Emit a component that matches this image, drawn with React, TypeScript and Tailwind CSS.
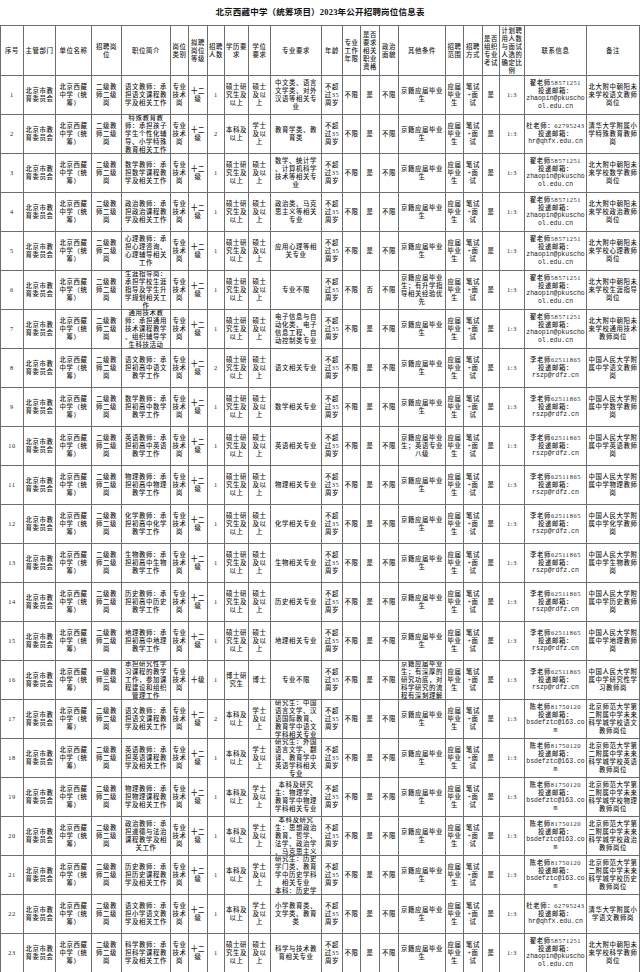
import React from "react";

// column widths, left to right (sum = 639)
const widths = [23, 32, 36, 30, 49, 18, 19, 17, 24, 22, 51, 21, 18, 19, 19, 47, 18, 19, 17, 25, 62, 53];

const headers = [
  "序号",
  "主管部门",
  "单位名称",
  "招聘岗|位",
  "职位简介",
  "岗位|类别",
  "拟聘|岗位|等级",
  "招聘|人数",
  "学历要|求",
  "学位|要求",
  "专业要求",
  "年龄",
  "专业|工作|年限",
  "是否|要求|相关|职业|资格",
  "政治|面貌",
  "其他条件",
  "招聘|范围",
  "招聘|方式",
  "是否|组织|专业|考试",
  "计划聘|用人数|与面试|人选的|确定比|例",
  "联系信息",
  "备注",
];

const ZHAI = "翟老师58571251|投递邮箱：|zhaopin@pkuscho|ol.edu.cn";
const DU = "杜老师：62795243|投递邮箱：|hr@qhfx.edu.cn";
const LI = "李老师62511865|投递邮箱：|rszp@rdfz.cn";
const CHEN = "陈老师81750120|投递邮箱：|bsdefztc@163.co|m";
const MASTER = "硕士研|究生及|以上";
const MASTER_DEG = "硕士|及以|上";
const BACH = "本科及|以上";
const BACH_DEG = "学士|及以|上";
const JING = "京籍应届毕业|生";

type Row = {
  post?: string;
  intro: string;
  level?: string;
  count: string;
  edu: string;
  degree: string;
  major: string;
  cert?: string;
  other?: string;
  contact: string;
  note: string;
};

const rows: Row[] = [
  { intro: "语文教师：承|担语文课程教|学及相关工作", count: "1", edu: MASTER, degree: MASTER_DEG, major: "中文类、语言|文学类、对外|汉语等相关专|业", contact: ZHAI, note: "北大附中朝阳未|来学校语文教师|岗位" },
  { intro: "特殊教育教|师：承担孩子|学生个性化辅|导、小学特殊|教育相关工作", count: "2", edu: BACH, degree: BACH_DEG, major: "教育学类、教|育类", contact: DU, note: "清华大学附属小|学特殊教育教师|岗" },
  { intro: "数学教师：承|担数学课程教|学及相关工作", count: "1", edu: MASTER, degree: MASTER_DEG, major: "数学、统计学|、计算机科学|技术等相关专|业", contact: ZHAI, note: "北大附中朝阳未|来学校数学教师|岗位" },
  { intro: "政治教师：承|担政治课程教|学及相关工作", count: "1", edu: MASTER, degree: MASTER_DEG, major: "政治类、马克|思主义等相关|专业", contact: ZHAI, note: "北大附中朝阳未|来学校政治教师|岗位" },
  { intro: "心理教师：承|担心理咨询、|心理辅导相关|工作", count: "1", edu: MASTER, degree: MASTER_DEG, major: "应用心理等相|关专业", contact: ZHAI, note: "北大附中朝阳未|来学校心理教师|岗位" },
  { intro: "生涯指导岗：|承担学校生涯|指导及学生升|学规划相关工|作", count: "1", edu: MASTER, degree: MASTER_DEG, major: "专业不限", cert: "否", other: "京籍应届毕业|生；有升学指|导相关经验优|先", contact: ZHAI, note: "北大附中朝阳未|来学校生涯指导|岗位" },
  { intro: "通用技术教|师：承担通用|技术课程教学|、组织辅导学|生科技活动", count: "1", edu: MASTER, degree: MASTER_DEG, major: "电子信息与自|动化类、电子|信息工程、自|动控制类专业", contact: ZHAI, note: "北大附中朝阳未|来学校通用技术|教师岗位" },
  { intro: "语文教师：承|担初高中语文|教学工作", count: "2", edu: MASTER, degree: MASTER_DEG, major: "语文相关专业", contact: LI, note: "中国人民大学附|属中学语文教师|岗" },
  { intro: "数学教师：承|担初高中数学|教学工作", count: "1", edu: MASTER, degree: MASTER_DEG, major: "数学相关专业", contact: LI, note: "中国人民大学附|属中学数学教师|岗" },
  { intro: "英语教师：承|担初高中英语|教学工作", count: "1", edu: MASTER, degree: MASTER_DEG, major: "英语相关专业", other: "京籍应届毕业|生；英语专业|八级", contact: LI, note: "中国人民大学附|属中学英语教师|岗" },
  { intro: "物理教师：承|担初高中物理|教学工作", count: "1", edu: MASTER, degree: MASTER_DEG, major: "物理相关专业", contact: LI, note: "中国人民大学附|属中学物理教师|岗" },
  { intro: "化学教师：承|担初高中化学|教学工作", count: "1", edu: MASTER, degree: MASTER_DEG, major: "化学相关专业", contact: LI, note: "中国人民大学附|属中学化学教师|岗" },
  { intro: "生物教师：承|担初高中生物|教学工作", count: "1", edu: MASTER, degree: MASTER_DEG, major: "生物相关专业", contact: LI, note: "中国人民大学附|属中学生物教师|岗" },
  { intro: "历史教师：承|担初高中历史|教学工作", count: "1", edu: MASTER, degree: MASTER_DEG, major: "历史相关专业", contact: LI, note: "中国人民大学附|属中学历史教师|岗" },
  { intro: "地理教师：承|担初高中地理|教学工作", count: "1", edu: MASTER, degree: MASTER_DEG, major: "地理相关专业", contact: LI, note: "中国人民大学附|属中学地理教师|岗" },
  { post: "一级教|师三级|岗", intro: "承担研究性学|习课程的教学|工作，参加课|程建设和组织|管理工作", level: "十级", count: "1", edu: "博士研|究生", degree: "博士", major: "专业不限", other: "京籍应届毕业|生；有深厚的|研究功底，对|科学研究的流|程有深刻理解", contact: LI, note: "中国人民大学附|属中学研究性学|习教师岗" },
  { intro: "语文教师：承|担语文课程教|学及相关工作", count: "2", edu: BACH, degree: BACH_DEG, major: "研究生：中国|语言文学、汉|语国际教育、|教育学中语文|学科相关专业", contact: CHEN, note: "北京师范大学第|二附属中学未来|科学城学校语文|教师岗位" },
  { intro: "英语教师：承|担英语课程教|学及相关工作", count: "1", edu: BACH, degree: BACH_DEG, major: "研究生：外国|语言文学、翻|译、教育学中|英语学科相关|专业", contact: CHEN, note: "北京师范大学第|二附属中学未来|科学城学校英语|教师岗位" },
  { intro: "物理教师：承|担物理课程教|学及相关工作", count: "1", edu: BACH, degree: BACH_DEG, major: "本科及研究|生：物理学、|教育学中物理|学科相关专业", contact: CHEN, note: "北京师范大学第|二附属中学未来|科学城学校物理|教师岗位" },
  { intro: "政治教师：承|担道德与法治|课程教学及相|关工作", count: "1", edu: BACH, degree: BACH_DEG, major: "本科及研究|生：思想政治|教育、哲学、|法学、政治学|、马克思主义", contact: CHEN, note: "北京师范大学第|二附属中学未来|科学城学校政治|教师岗位" },
  { intro: "历史教师：承|担历史课程教|学及相关工作", count: "1", edu: BACH, degree: BACH_DEG, major: "研究生：历史|学门类、教育|学中历史学科|相关专业|本科：历史学", contact: CHEN, note: "北京师范大学第|二附属中学未来|科学城学校历史|教师岗位" },
  { intro: "语文教师：承|担小学语文教|学及相关工作", count: "1", edu: BACH, degree: BACH_DEG, major: "小学教育类、|文学类、教育|类", contact: DU, note: "清华大学附属小|学语文教师岗" },
  { intro: "科学教师：承|担科学课程教|学及相关工作", count: "1", edu: MASTER, degree: MASTER_DEG, major: "科学与技术教|育相关专业", contact: ZHAI, note: "北大附中朝阳未|来学校科学教师|岗位" },
];

function Cell({ text, header }: { text: string; header?: boolean }) {
  const lines = text.split("|");
  return (
    <td className="border border-[#6e6e6e] p-0 align-middle">
      <div
        className={`${header ? "h-[49px]" : "h-[38px]"} overflow-hidden flex flex-col items-center justify-center text-center`}
      >
        {lines.map((l, i) =>
          /^[a-z0-9@.]+$/i.test(l) && /[a-z]/i.test(l) ? (
            <div
              key={i}
              className="whitespace-nowrap tracking-normal text-[6.5px]"
              style={{ fontFamily: '"Liberation Mono", monospace' }}
            >
              {l}
            </div>
          ) : (
            <div key={i} className="whitespace-nowrap">
              {l}
            </div>
          )
        )}
      </div>
    </td>
  );
}

export default function App() {
  return (
    <div
      className="w-[640px] h-[972px] bg-white text-[#1a1a1a] overflow-hidden"
      style={{ fontFamily: '"Liberation Serif", "Noto Sans CJK SC", serif' }}
    >
      {/* Title */}
      <div className="h-[25px] flex items-center justify-center">
        <h1 className="text-[8.5px] font-bold tracking-[0.2px] text-[#111]">
          北京西藏中学（统筹项目）2023年公开招聘岗位信息表
        </h1>
      </div>

      <table className="table-fixed border-collapse w-[639px] text-[6.4px] leading-[8px] tracking-[0.6px] font-medium">
        <colgroup>
          {widths.map((w, i) => (
            <col key={i} style={{ width: w }} />
          ))}
        </colgroup>
        <thead>
          <tr>
            {headers.map((h, i) => (
              <Cell key={i} text={h} header />
            ))}
          </tr>
        </thead>
        <tbody>
          {rows.map((r, i) => {
            const cells = [
              String(i + 1),
              "北京市教|育委员会",
              "北京西藏|中学（统|筹）",
              r.post ?? "二级教|师二级|岗",
              r.intro,
              "专业|技术|岗",
              r.level ?? "十二|级",
              r.count,
              r.edu,
              r.degree,
              r.major,
              "不超|过35|周岁",
              "不限",
              r.cert ?? "是",
              "不限",
              r.other ?? JING,
              "应届|毕业|生",
              "笔试|+面|试",
              "是",
              "1:3",
              r.contact,
              r.note,
            ];
            return (
              <tr key={i}>
                {cells.map((c, j) => (
                  <Cell key={j} text={c} />
                ))}
              </tr>
            );
          })}
        </tbody>
      </table>
    </div>
  );
}
